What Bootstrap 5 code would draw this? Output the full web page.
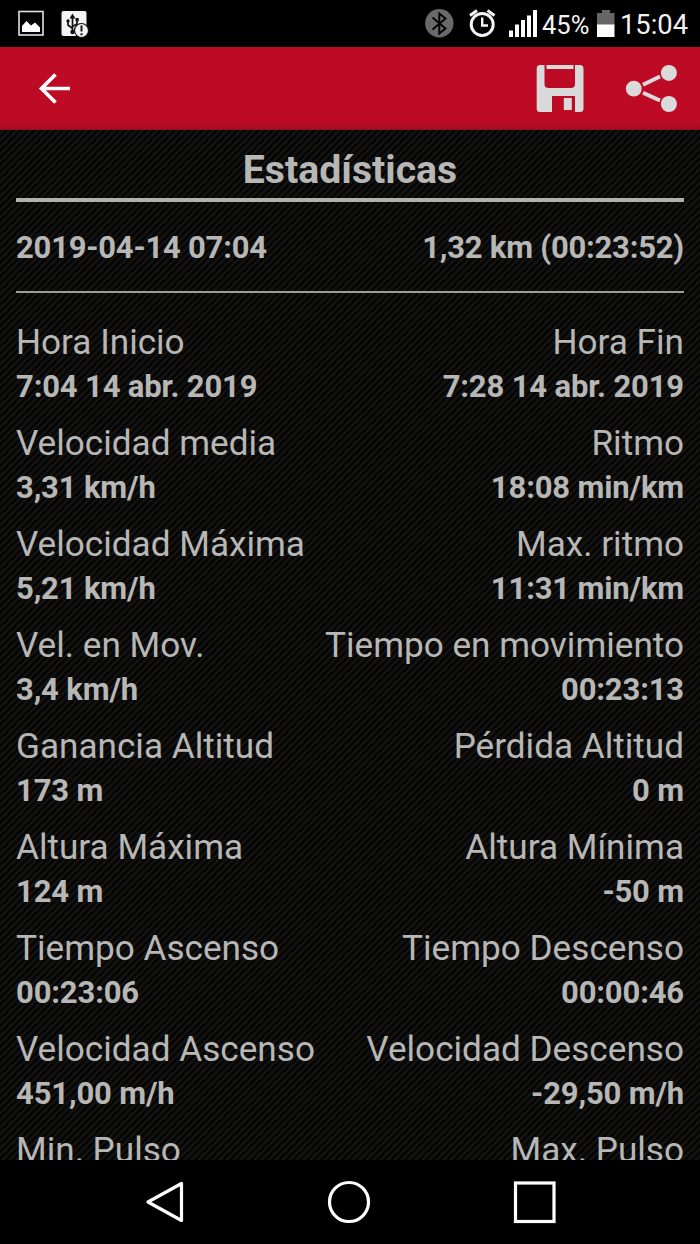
<!DOCTYPE html>
<html lang="es">
<head>
<meta charset="utf-8">
<meta name="viewport" content="width=device-width, initial-scale=1">
<title>Estadísticas</title>
<link href="https://cdn.jsdelivr.net/npm/bootstrap@5.3.0/dist/css/bootstrap.min.css" rel="stylesheet">
<style>
  body { font-family: Roboto, "Noto Sans", sans-serif; background: #000; color: #b7b7b6; height: 1244px; }
  svg { display: block; flex: none; }
  .status-bar { height: 47px; color: #f2f2f2; }
  .battery-text { font-size: 25.5px; line-height: 30px; width: 48px; padding-top: 2px; }
  .clock-text { font-size: 27.3px; line-height: 34px; padding-top: 2px; }
  .app-bar { height: 83px; background: linear-gradient(#bd0b26 0 74px, #a50d23 82px, #8a0a1c 83px); }
  .stats { background: linear-gradient(135deg, #010101 0, #181715 25%, #010101 50%, #181715 75%, #010101 100%) 0 0 / 7px 7px; padding: 0 16px; }
  .stats-title { font-size: 39.2px; line-height: 44px; padding-top: 18px; height: 68px; }
  .rule-thick { height: 4px; background: #b0b0ae; }
  .rule-thin { height: 2px; background: #9c9c9a; margin-bottom: 27px; }
  .summary { height: 89px; font-size: 31px; line-height: 36px; padding-top: 28px; letter-spacing: -.22px; }
  .stat-row { height: 101px; }
  .stat-label { font-size: 35.15px; line-height: 45px; }
  .stat-value { font-size: 31px; line-height: 44px; font-weight: 700; letter-spacing: -.15px; }
  .nav-keys { height: 84px; }
</style>
</head>
<body class="d-flex flex-column overflow-hidden">

<header class="status-bar d-flex align-items-center flex-shrink-0">
  <svg width="420" height="47" viewBox="0 0 420 47">
    <rect x="19" y="11.500" width="24" height="23.500" fill="none" stroke="#e0e0e0" stroke-width="1.600"/>
    <path d="M22 32V26L26.500 21L31 25.500L35 22.500L40 27.500V32Z" fill="#fff"/>
    <rect x="61.500" y="11" width="25" height="25" rx="2" fill="#f4f4f4"/>
    <path d="M72.500 17V32M68 21.500V25L72.500 28.500M77 20V24L72.500 26.500" fill="none" stroke="#111" stroke-width="1.700"/>
    <path d="M72.500 13.500L75.500 18.500H69.500Z" fill="#111"/>
    <circle cx="68" cy="21" r="1.700" fill="#111"/><rect x="75.500" y="18" width="3.200" height="3.200" fill="#111"/><circle cx="72.500" cy="32" r="2.200" fill="#111"/>
    <circle cx="81.500" cy="30.500" r="7" fill="#f4f4f4" stroke="#111" stroke-width="1.200"/>
    <path d="M81.500 25.500V31.500M81.500 33.200V35.300" stroke="#111" stroke-width="2"/>
  </svg>
  <svg width="122" height="47" viewBox="420 0 122 47">
    <circle cx="439.300" cy="23.300" r="14.200" fill="#696969"/>
    <path d="M432.500 17.500L445.500 28.500L439.300 33.500V13.500L445.500 18.500L432.500 29.500" fill="none" stroke="#000" stroke-width="1.900"/>
    <circle cx="482.200" cy="24.500" r="11" fill="none" stroke="#f4f4f4" stroke-width="3"/>
    <path d="M482.200 17.500V25.500H488" fill="none" stroke="#f4f4f4" stroke-width="2.400"/>
    <path d="M470 15.500L477 10.500M487.500 10.500L494.500 15.500" stroke="#f4f4f4" stroke-width="3"/>
    <path d="M509 30.500h4V37h-4zM515 24.500h4V37h-4zM521 20h4V37h-4zM527 15.500h4V37h-4zM533 10h4V37h-4z" fill="#fff"/>
  </svg>
  <span class="battery-text text-nowrap">45%</span>
  <svg width="30" height="47" viewBox="590 0 30 47">
    <path d="M597 13H602V10H610V13H614.500V25H597Z" fill="#666"/><rect x="597" y="24.500" width="17.500" height="12.500" fill="#fff"/>
  </svg>
  <span class="clock-text text-nowrap">15:04</span>
</header>

<nav class="app-bar d-flex align-items-center justify-content-between flex-shrink-0">
  <svg width="100" height="83" viewBox="0 47 100 83"><path d="M70 88.500H41M55.500 74.500L41.500 88.500L55.500 102.500" fill="none" stroke="#fff" stroke-width="3.700"/></svg>
  <svg width="180" height="83" viewBox="520 47 180 83">
    <path d="M540 65H544.500V84Q544.500 88 548.500 88H571Q575 88 575 84V65H580Q583.500 65 583.500 69V108.500Q583.500 112 580 112H575V96H552V112H540Q536.700 112 536.700 108.500V69Q536.700 65 540 65Z" fill="#dadada"/>
    <rect x="546.500" y="65" width="27" height="4" fill="#dadada"/><rect x="563.800" y="98" width="8" height="12" fill="#dadada"/>
    <g fill="#dadada"><circle cx="633.800" cy="88.700" r="7.900"/><circle cx="668.900" cy="72.900" r="8"/><circle cx="668.900" cy="104" r="8"/></g>
    <path d="M643 84.700L660 76.500M643 92.700L660 100.500" stroke="#dadada" stroke-width="4"/>
  </svg>
</nav>

<main class="stats flex-grow-1 overflow-hidden">
  <h1 class="stats-title text-center fw-bold m-0">Estadísticas</h1>
  <div class="rule-thick"></div>
  <div class="summary d-flex justify-content-between fw-bold"><span>2019-04-14 07:04</span><span>1,32 km (00:23:52)</span></div>
  <div class="rule-thin"></div>
  <div class="stat-list">
    <div class="stat-row d-flex justify-content-between"><div><div class="stat-label">Hora Inicio</div><div class="stat-value">7:04 14 abr. 2019</div></div><div class="text-end"><div class="stat-label">Hora Fin</div><div class="stat-value">7:28 14 abr. 2019</div></div></div>
    <div class="stat-row d-flex justify-content-between"><div><div class="stat-label">Velocidad media</div><div class="stat-value">3,31 km/h</div></div><div class="text-end"><div class="stat-label">Ritmo</div><div class="stat-value">18:08 min/km</div></div></div>
    <div class="stat-row d-flex justify-content-between"><div><div class="stat-label">Velocidad Máxima</div><div class="stat-value">5,21 km/h</div></div><div class="text-end"><div class="stat-label">Max. ritmo</div><div class="stat-value">11:31 min/km</div></div></div>
    <div class="stat-row d-flex justify-content-between"><div><div class="stat-label">Vel. en Mov.</div><div class="stat-value">3,4 km/h</div></div><div class="text-end"><div class="stat-label">Tiempo en movimiento</div><div class="stat-value">00:23:13</div></div></div>
    <div class="stat-row d-flex justify-content-between"><div><div class="stat-label">Ganancia Altitud</div><div class="stat-value">173 m</div></div><div class="text-end"><div class="stat-label">Pérdida Altitud</div><div class="stat-value">0 m</div></div></div>
    <div class="stat-row d-flex justify-content-between"><div><div class="stat-label">Altura Máxima</div><div class="stat-value">124 m</div></div><div class="text-end"><div class="stat-label">Altura Mínima</div><div class="stat-value">-50 m</div></div></div>
    <div class="stat-row d-flex justify-content-between"><div><div class="stat-label">Tiempo Ascenso</div><div class="stat-value">00:23:06</div></div><div class="text-end"><div class="stat-label">Tiempo Descenso</div><div class="stat-value">00:00:46</div></div></div>
    <div class="stat-row d-flex justify-content-between"><div><div class="stat-label">Velocidad Ascenso</div><div class="stat-value">451,00 m/h</div></div><div class="text-end"><div class="stat-label">Velocidad Descenso</div><div class="stat-value">-29,50 m/h</div></div></div>
    <div class="stat-row d-flex justify-content-between"><div class="stat-label">Min. Pulso</div><div class="stat-label">Max. Pulso</div></div>
  </div>
</main>

<footer class="nav-keys bg-black flex-shrink-0">
  <svg width="700" height="84" viewBox="0 1160 700 84" fill="none" stroke="#fff" stroke-width="3.200">
    <path d="M181.500 1183.500V1220.500L148 1202Z" stroke-linejoin="round"/>
    <circle cx="349" cy="1202" r="19.500"/>
    <rect x="515.500" y="1183" width="38.500" height="38.500"/>
  </svg>
</footer>

<script src="https://cdn.jsdelivr.net/npm/bootstrap@5.3.0/dist/js/bootstrap.bundle.min.js"></script>
</body>
</html>
